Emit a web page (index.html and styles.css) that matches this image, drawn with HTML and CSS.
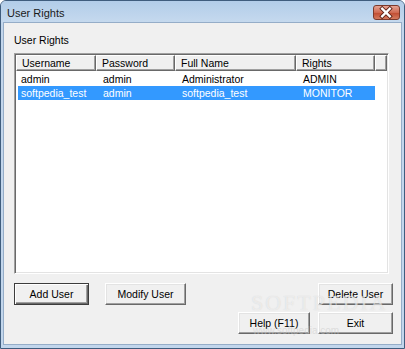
FILE: index.html
```html
<!DOCTYPE html>
<html lang="en">

<head>
  <meta charset="UTF-8">
  <title>User Rights</title>
  <link rel="stylesheet" href="styles.css">
</head>

<body>
  <div class="window">
    <div class="titlebar">
      <span class="title">User Rights</span>
      <div class="close">
        <svg width="27" height="15" viewBox="0 0 27 15">
          <path d="M9.5 3.5 L17.5 11.5 M17.5 3.5 L9.5 11.5" stroke="#5a1f14" stroke-width="4.2" stroke-linecap="square" fill="none" />
          <path d="M9.5 3.5 L17.5 11.5 M17.5 3.5 L9.5 11.5" stroke="#ffffff" stroke-width="2.4" stroke-linecap="square" fill="none" />
        </svg>
      </div>
    </div>
    <div class="client">
      <div class="caption">User Rights</div>
      <div class="listview">
        <div class="lv-header">
          <div class="hcell col-user">Username</div>
          <div class="hcell col-pass">Password</div>
          <div class="hcell col-name">Full Name</div>
          <div class="hcell col-rights">Rights</div>
          <div class="hcell col-filler"></div>
        </div>
        <div class="lv-row">
          <span class="cell first">admin</span>
          <span class="cell col-pass">admin</span>
          <span class="cell col-name">Administrator</span>
          <span class="cell col-rights">ADMIN</span>
        </div>
        <div class="lv-row selected">
          <span class="cell first">softpedia_test</span>
          <span class="cell col-pass">admin</span>
          <span class="cell col-name">softpedia_test</span>
          <span class="cell col-rights">MONITOR</span>
        </div>
      </div>
      <div class="btn-row top-row">
        <div class="btn default btn-add">Add User</div>
        <div class="btn btn-modify">Modify User</div>
        <div class="btn btn-delete">Delete User</div>
      </div>
      <div class="btn-row bottom-row">
        <div class="btn btn-help">Help (F11)</div>
        <div class="btn btn-exit">Exit</div>
      </div>
    </div>
    <div class="watermark">
      <div class="wm-big">SOFTPEDIA</div>
      <div class="wm-small">www.softpedia.com</div>
    </div>
  </div>
</body>

</html>
```

FILE: styles.css
```css
* {
  padding: 0;
  margin: 0;
  box-sizing: border-box;
}

body {
  width: 405px;
  height: 349px;
  overflow: hidden;
  background: #ffffff;
  font-family: "Liberation Sans", Arial, sans-serif;
  font-size: 10.5px;
  color: #000000;
}

.window {
  position: relative;
  width: 405px;
  height: 349px;
  border: 1px solid #3f5d7e;
  border-radius: 6px 6px 0 0;
  background: #c2d6ec;
  display: flex;
  flex-direction: column;
}

.titlebar {
  height: 21px;
  display: flex;
  align-items: center;
  padding: 0 4px 0 6px;
  background: linear-gradient(#b2cde9, #c5d9ee);
  border-radius: 5px 5px 0 0;
}

.title {
  font-size: 11px;
  color: #1a1a1a;
  padding-top: 2px;
}

.close {
  margin-left: auto;
  margin-top: 2px;
  width: 27px;
  height: 15px;
  border: 1px solid #7b3a2c;
  border-radius: 3px;
  background: linear-gradient(#e6a393, #d06a52 50%, #bf4a30 51%, #d47a5e);
  display: flex;
}

.close svg {
  margin: -1px 0 0 -1px;
}

.client {
  flex: 1;
  margin: 0 2px 3px 2px;
  border: 1px solid #95adc8;
  background: #f0f0f0;
  padding: 11px 8px 0 10px;
}

.caption {
  line-height: 13px;
  margin-bottom: 6px;
}

.listview {
  width: 375px;
  height: 221px;
  background: #ffffff;
  border: 1px solid;
  border-color: #a0a0a0 #ffffff #ffffff #a0a0a0;
  box-shadow: inset 1px 1px #696969, inset -1px -1px #e3e3e3;
  padding: 1px;
}

.lv-header {
  display: flex;
  height: 16px;
  margin-bottom: 1px;
}

.hcell {
  height: 16px;
  line-height: 14px;
  padding-left: 5px;
  background: #f0f0f0;
  border: 1px solid;
  border-color: #ffffff #696969 #696969 #ffffff;
  box-shadow: inset -1px -1px #a0a0a0;
  white-space: nowrap;
}

.col-user {
  width: 80px;
}

.col-pass {
  width: 79px;
}

.col-name {
  width: 121px;
}

.col-rights {
  width: 79px;
}

.col-filler {
  width: 12px;
}

.lv-row {
  display: flex;
  height: 14px;
  line-height: 14px;
  margin-left: 2px;
  width: 357px;
}

.lv-row.selected {
  background: #3399ff;
  color: #ffffff;
}

.cell {
  padding-left: 7px;
  white-space: nowrap;
}

.cell.first {
  width: 78px;
  padding-left: 3px;
}

.btn-row {
  display: flex;
  gap: 8px;
}

.top-row {
  margin-top: 9px;
}

.bottom-row {
  margin-top: 7px;
  justify-content: flex-end;
}

.btn {
  height: 22px;
  display: flex;
  align-items: center;
  justify-content: center;
  background: #f0f0f0;
  border: 1px solid;
  border-color: #ffffff #696969 #696969 #ffffff;
  box-shadow: inset -1px -1px #a0a0a0, inset 1px 1px #e3e3e3;
}

.btn.default {
  border: 1px solid #3c3c3c;
  box-shadow: inset 1px 1px #ffffff, inset -1px -1px #696969, inset -2px -2px #a0a0a0;
}

.btn-add {
  width: 75px;
}

.btn-modify {
  width: 81px;
  margin-left: 8px;
}

.btn-delete {
  width: 75px;
  margin-left: auto;
}

.btn-help {
  width: 72px;
}

.btn-exit {
  width: 75px;
}

/* faint watermark over the lower right */
.watermark {
  position: absolute;
  left: 250px;
  top: 289px;
  pointer-events: none;
  color: rgba(255, 255, 255, 0.55);
}

.wm-big {
  font-family: "Liberation Serif", serif;
  font-size: 22px;
  letter-spacing: 2px;
  text-shadow: 0 0 1px rgba(150, 150, 150, 0.35);
}

.wm-small {
  margin: 9px 0 0 2px;
  font-size: 10px;
  color: rgba(200, 200, 200, 0.5);
}
```
